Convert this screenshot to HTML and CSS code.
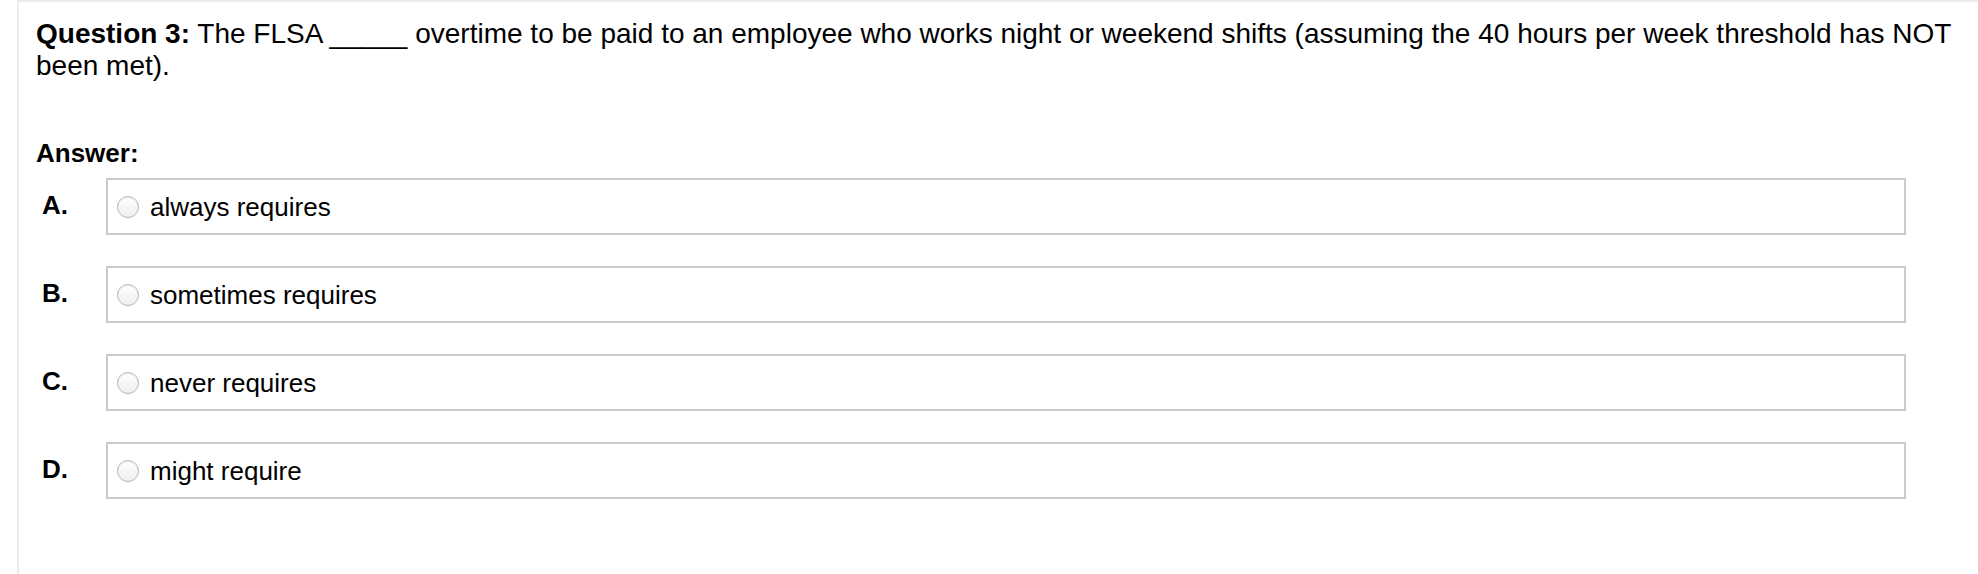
FILE: index.html
```html
<!DOCTYPE html>
<html>
<head>
<meta charset="utf-8">
<link rel="stylesheet" href="styles.css">
</head>
<body>
<div class="panel">
  <p class="question"><b>Question 3:</b> The FLSA _____ overtime to be paid to an employee who works night or weekend shifts (assuming the 40 hours per week threshold has NOT been met).</p>
  <div class="answer-label">Answer:</div>
  <div class="options">
    <div class="letter">A.</div>
    <label class="choice"><span class="radio"></span><span class="choice-text">always requires</span></label>
    <div class="letter">B.</div>
    <label class="choice"><span class="radio"></span><span class="choice-text">sometimes requires</span></label>
    <div class="letter">C.</div>
    <label class="choice"><span class="radio"></span><span class="choice-text">never requires</span></label>
    <div class="letter">D.</div>
    <label class="choice"><span class="radio"></span><span class="choice-text">might require</span></label>
  </div>
</div>
</body>
</html>
```

FILE: styles.css
```css
html, body {
  margin: 0;
  padding: 0;
  background: #ffffff;
  height: 100%;
}
body {
  font-family: "Liberation Sans", Arial, Helvetica, sans-serif;
  color: #000;
  padding-left: 17px;
  box-sizing: border-box;
}
.panel {
  border-top: 2px solid #ececec;
  border-left: 2px solid #ececec;
  min-height: 100%;
  box-sizing: border-box;
  padding: 16px 0 0 17px;
}
.question {
  margin: 0;
  font-size: 28px;
  line-height: 32px;
}
.question b {
  font-weight: bold;
}
.answer-label {
  margin-top: 56px;
  font-size: 26px;
  line-height: 30px;
  font-weight: bold;
}
.options {
  margin-top: 10px;
  display: grid;
  grid-template-columns: 70px 1800px;
  row-gap: 31px;
  align-items: center;
}
.letter {
  font-size: 26px;
  font-weight: bold;
  padding-left: 6px;
  line-height: 30px;
  padding-bottom: 3px;
}
.choice {
  height: 57px;
  box-sizing: border-box;
  border: 2px solid #cbcbcb;
  display: flex;
  align-items: center;
  padding-left: 9px;
  gap: 11px;
  font-size: 26px;
}
.radio {
  width: 22px;
  height: 22px;
  border-radius: 50%;
  box-sizing: border-box;
  border: 1px solid #b8b8b8;
  background: linear-gradient(#ffffff, #eeeeee);
  box-shadow: inset 0 1px 1px rgba(0,0,0,0.06);
  flex: none;
}
.choice-text {
  line-height: 30px;
}
```
